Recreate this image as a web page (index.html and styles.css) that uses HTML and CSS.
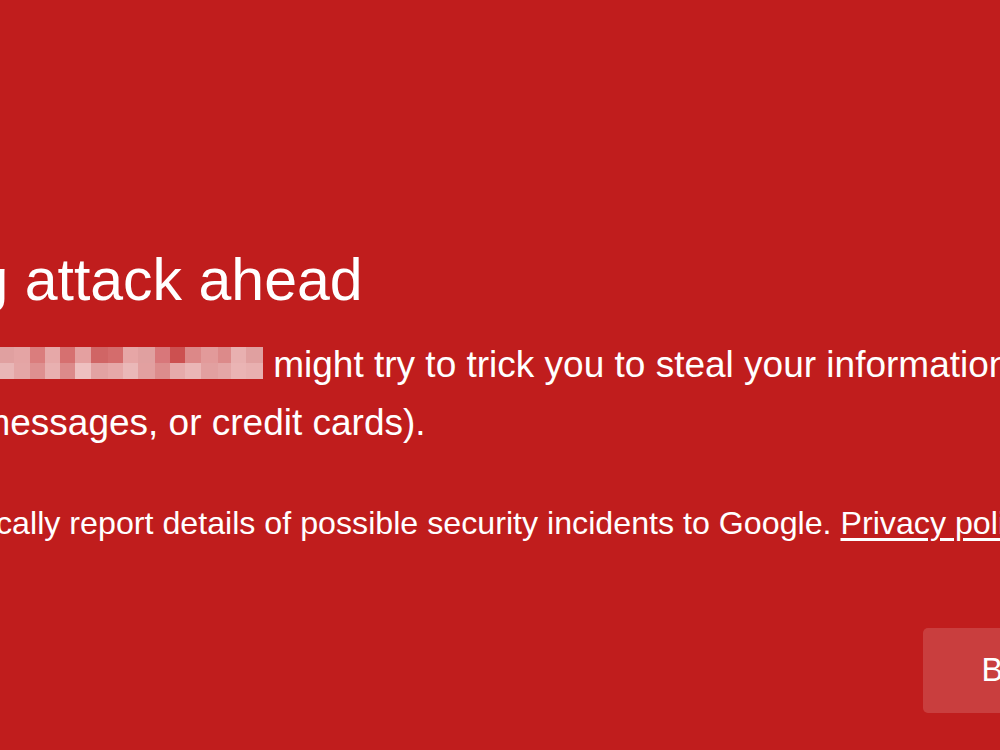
FILE: index.html
```html
<!DOCTYPE html>
<html lang="en">
<head>
    <meta charset="UTF-8">
    <meta name="viewport" content="width=device-width, initial-scale=1.0">
    <title>Security error</title>
    <link rel="stylesheet" href="styles.css">
</head>
<body>
    <div class="interstitial">
        <h1>Phishing attack ahead</h1>
        <p class="mainmessage">Attackers on <span class="hiddenurl"></span> might try to trick you to steal your information (for example, passwords, messages, or credit cards).</p>
        <div class="reporting">
            <span class="checkbox"></span>
            <span class="reportlabel">Automatically report details of possible security incidents to Google. <a href="#" class="privacy">Privacy policy</a></span>
        </div>
        <div class="nav">
            <button class="backbutton">Back to safety</button>
        </div>
    </div>
</body>
</html>
```

FILE: styles.css
```css
* {
    box-sizing: border-box;
    padding: 0;
    margin: 0;
}

html,
body {
    height: 100%;
    width: 100%;
}

body {
    background-color: #c01d1d;
    color: #fff;
    font-family: "Liberation Sans", Arial, sans-serif;
    overflow: hidden;
}

.interstitial {
    margin-left: -218px;
    width: 1540px;
    padding-top: 243px;
}

h1 {
    font-size: 59px;
    font-weight: normal;
    line-height: 74px;
}

.mainmessage {
    margin-top: 19px;
    font-size: 37px;
    line-height: 58px;
}

.hiddenurl {
    display: inline-block;
    width: 265px;
    height: 32px;
    vertical-align: -2px;
    filter: blur(0.7px);
    background-image:
        linear-gradient(to right,
            #e0a0a0 0 16px, #e4a4a4 16px 32px, #da7d7d 32px 47px, #e6a8a8 47px 62px,
            #d67070 62px 77px, #e4a0a0 77px 93px, #d06565 93px 110px, #d46c6c 110px 125px,
            #e6a6a6 125px 140px, #e0a0a0 140px 157px, #d8777a 157px 172px, #cc5050 172px 187px,
            #dc8888 187px 203px, #e29a9a 203px 220px, #dc8a8a 220px 233px, #e8b0b0 233px 248px,
            #e0a0a0 248px 265px),
        linear-gradient(to right,
            #e8b6b6 0 16px, #e4a6a6 16px 32px, #de9090 32px 47px, #e8b0b0 47px 62px,
            #dc8a8a 62px 77px, #eec0c0 77px 93px, #e2a2a2 93px 110px, #e6a8a8 110px 125px,
            #eab8b8 125px 140px, #e2a0a0 140px 157px, #dc8c8c 157px 172px, #e6aaaa 172px 187px,
            #eab6b6 187px 203px, #e2a0a0 203px 220px, #e4a6a6 220px 233px, #eab4b4 233px 248px,
            #e8b0b0 248px 265px);
    background-size: 265px 16px, 265px 16px;
    background-position: 0 0, 0 16px;
    background-repeat: no-repeat;
}

.reporting {
    margin-top: 45px;
    display: flex;
    align-items: flex-start;
    gap: 55px;
    font-size: 32.2px;
    line-height: 52px;
}

.checkbox {
    flex: none;
    width: 32px;
    height: 32px;
    margin-top: 10px;
    border: 3px solid #fff;
    border-radius: 3px;
}

.privacy {
    color: #fff;
    text-decoration: underline;
    text-underline-offset: 4px;
}

.nav {
    margin-top: 79px;
    display: flex;
    justify-content: flex-end;
    padding-right: 78px;
}

.backbutton {
    cursor: pointer;
    font-family: inherit;
    font-size: 32.4px;
    line-height: 37px;
    padding: 24px 59px;
    color: #fff;
    background-color: rgba(255, 255, 255, 0.15);
    border: none;
    border-radius: 5px;
}
```
